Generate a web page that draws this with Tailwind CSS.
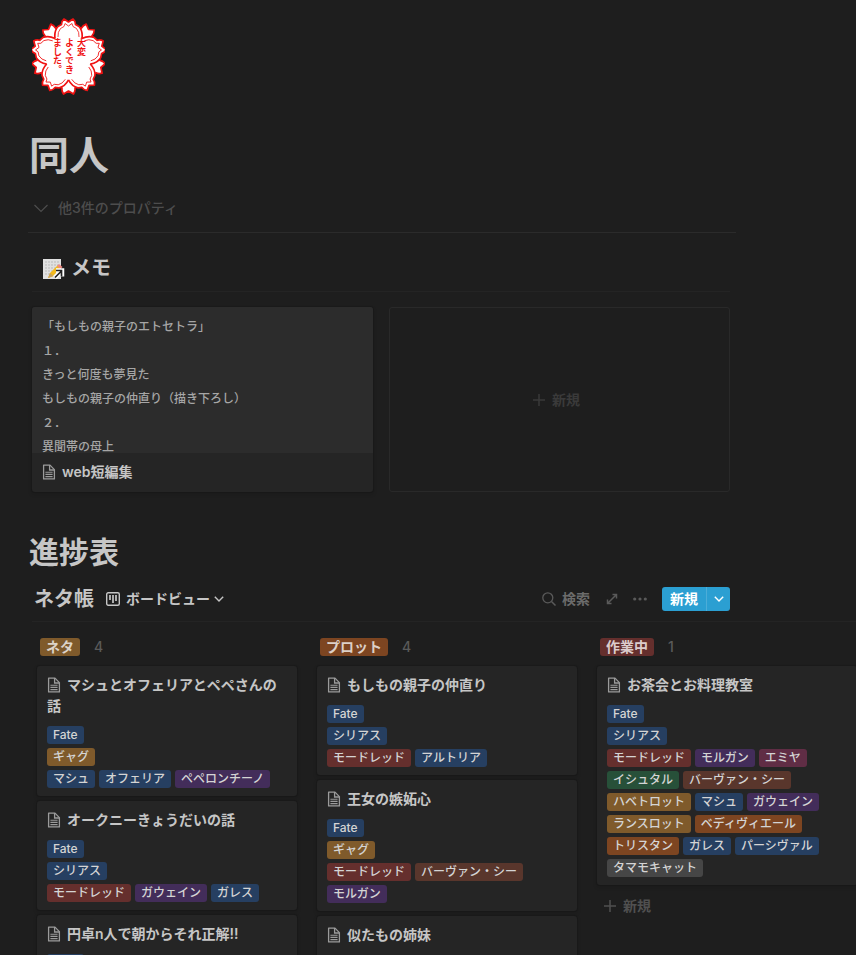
<!DOCTYPE html>
<html lang="ja">
<head>
<meta charset="utf-8">
<meta name="viewport" content="width=device-width, initial-scale=1">
<title>同人</title>
<script src="https://cdn.jsdelivr.net/npm/@tailwindcss/browser@4"></script>
</head>
<body class="bg-[#1e1e1e] text-[#c6c6c6] font-['Inter','Noto_Sans_CJK_JP',sans-serif]">
<svg class="hidden" aria-hidden="true">
  <symbol id="page" viewBox="0 0 14 16">
    <path d="M1.6 1.1H8l4.4 4.5v9.3H1.6z" fill="none" stroke="currentColor" stroke-width="1.3" stroke-linejoin="round"/>
    <path d="M7.6 1v5h4.8" fill="none" stroke="currentColor" stroke-width="1.3"/>
    <path d="M3.4 8.2h7.2M3.4 10.4h7.2M3.4 12.6h7.2" stroke="currentColor" stroke-width="1.1"/>
  </symbol>
  <symbol id="plus" viewBox="0 0 12 12"><path d="M6 0v12M0 6h12" stroke="currentColor" stroke-width="1.5"/></symbol>
  <symbol id="chevron" viewBox="0 0 10 6"><path d="M.8.8 5 5 9.2.8" fill="none" stroke="currentColor" stroke-width="1.4"/></symbol>
</svg>
<main class="h-screen overflow-x-hidden overflow-y-auto [scrollbar-width:none] pl-7 pt-[18px]">
  <header class="mr-[120px]">
    <svg class="ml-1 block h-[77px] w-[73px]" viewBox="-36.500 -39 73 77" role="img" aria-label="大変よくできました。">
      <defs>
        <path id="back" d="M-12-22Q-12-27-9-30L-6.500-31Q-7-34-5-37L0-34 5-37Q7-34 6.500-31L9-30Q12-27 12-22" />
        <path id="front" d="M-13.500-18.500Q-14.500-26-10.500-30.500L-7-32.500Q-7-36-4.500-38L0-35 4.500-38Q7-36 7-32.500L10.500-30.500Q14.500-26 13.500-18.500" />
        <path id="inner" d="M-10.500-20Q-11-25-8-28.500L-4.500-30.500-3.500-33.500 0-31 3.500-33.500 4.500-30.500 8-28.500Q11-25 10.500-20" />
      </defs>
      <g fill="#fff" stroke="#f01212" stroke-width="1.7" stroke-linejoin="round">
        <use href="#back" transform="rotate(36)"/><use href="#back" transform="rotate(108)"/><use href="#back" transform="rotate(180)"/><use href="#back" transform="rotate(252)"/><use href="#back" transform="rotate(324)"/>
        <circle r="23" stroke="none"/>
        <use href="#front"/><use href="#front" transform="rotate(72)"/><use href="#front" transform="rotate(144)"/><use href="#front" transform="rotate(216)"/><use href="#front" transform="rotate(288)"/>
        <circle r="22" stroke="none"/>
      </g>
      <g fill="none" stroke="#f01212" stroke-width=".8">
        <use href="#inner"/><use href="#inner" transform="rotate(72)"/><use href="#inner" transform="rotate(144)"/><use href="#inner" transform="rotate(216)"/><use href="#inner" transform="rotate(288)"/>
      </g>
      <g class="text-[9px] font-bold [writing-mode:vertical-rl]" fill="#f01212">
        <text x="13" y="-19">大変</text><text x="1" y="-19">よくでき</text><text x="-11" y="-19">ました。</text>
      </g>
    </svg>
    <h1 class="mt-[37px] pl-px text-[40px] leading-[48px] font-bold">同人</h1>
    <button class="mt-[14px] flex h-7 items-center gap-[10px] pl-[6px] text-sm text-[#4d4d4d] font-medium">
      <svg class="h-[9px] w-[14px]" viewBox="0 0 14 9"><path d="M.5 1 7 7.500 13.500 1" fill="none" stroke="currentColor" stroke-width="1.200"/></svg>
      他3件のプロパティ
    </button>
  </header>

  <section class="mt-[10px] mr-[120px] border-t border-[#2b2b2b] pt-3 pr-[6px] pl-1">
    <div class="flex h-[47px] items-center gap-[6px] border-b border-[#242424] pl-[10px]">
      <svg class="h-[23px] w-[23px]" viewBox="0 0 23 23" aria-hidden="true">
        <path d="M1 2h18v20H1z" fill="#e0e0e0"/>
        <path d="M3 5h14M3 8h14M3 11h14M3 14h9M3 17h7" stroke="#b9b9b9" stroke-width="1" stroke-dasharray="2 1"/>
        <path d="m6 21 2-5L16 8l3 3-8.500 8.500z" fill="#f2b91d"/><path d="m15 9 2-2 3.500 3-2 2z" fill="#ee8a83"/><path d="m6 21 2-5 3.500 3z" fill="#c8a15c"/>
        <path d="m13 20.500 6-6M14 13.500h6v6" fill="none" stroke="#fff" stroke-width="4.500"/>
        <path d="m13 20.500 6.500-6.500M14 13.500h5.500v6" fill="none" stroke="#222" stroke-width="1.700"/>
      </svg>
      <h2 class="text-xl font-bold">メモ</h2>
    </div>
    <div class="mt-[15px] grid grid-cols-2 gap-4">
      <a href="#" class="flex flex-col overflow-hidden rounded-[3px] bg-[#252525] shadow-[0_0_0_1px_rgba(15,15,15,0.2),0_2px_4px_rgba(15,15,15,0.2)]">
        <div class="h-[146px] overflow-hidden bg-[#2c2c2c] px-[10px] pt-2 text-xs leading-6 font-medium text-[#a6a6a6]">
          <p>「もしもの親子のエトセトラ」</p><p>１．</p><p>きっと何度も夢見た</p><p>もしもの親子の仲直り（描き下ろし）</p><p>２．</p><p>異聞帯の母上</p>
        </div>
        <div class="flex h-[39px] items-center gap-[6px] px-[10px] pb-[2px] text-sm font-semibold"><svg class="h-4 w-[14px] text-[#9b9b9b]"><use href="#page"/></svg>web短編集</div>
      </a>
      <button class="flex items-center justify-center gap-[7px] rounded-[3px] border border-[#292929] pr-[6px] text-sm font-semibold text-[#3a3a3a]"><svg class="h-3 w-3"><use href="#plus"/></svg>新規</button>
    </div>
  </section>

  <h2 class="mt-[41px] pl-px text-3xl leading-[39px] font-bold">進捗表</h2>

  <section class="pl-1">
    <div class="mt-[5px] border-b border-[#242424]">
      <div class="mr-[126px] flex h-11 items-center">
        <h3 class="pl-[2px] text-xl font-bold">ネタ帳</h3>
        <button class="ml-3 flex items-center text-sm font-semibold">
          <svg class="mr-[6px] h-[14px] w-[14px]" viewBox="0 0 14 14"><rect x=".7" y=".7" width="12.600" height="12.600" rx="1.500" fill="none" stroke="currentColor" stroke-width="1.400"/><path d="M4 3v5M7 3v8M10 3v6" stroke="currentColor" stroke-width="1.700"/></svg>
          ボードビュー
          <svg class="ml-1 h-[6px] w-[10px]"><use href="#chevron"/></svg>
        </button>
        <div class="ml-auto flex items-center text-[#6b6b6b]">
          <button class="flex items-center gap-[6px] text-sm font-semibold"><svg class="h-[14px] w-[14px] text-[#5a5a5a]" viewBox="0 0 14 14"><circle cx="5.800" cy="5.800" r="5" fill="none" stroke="currentColor" stroke-width="1.300"/><path d="m9.500 9.500 4 4" stroke="currentColor" stroke-width="1.500"/></svg>検索</button>
          <button class="ml-4 text-[#5a5a5a]" aria-label="全画面で開く"><svg class="block h-3 w-3" viewBox="0 0 12 12"><path d="M1.500 10.500 10.500 1.500M6.500 1.500h4v4M5.500 10.500h-4v-4" fill="none" stroke="currentColor" stroke-width="1.500"/></svg></button>
          <button class="ml-[15px] text-[#5a5a5a]" aria-label="その他"><svg class="block h-1 w-[14px]" viewBox="0 0 14 4" fill="currentColor"><circle cx="1.700" cy="2" r="1.600"/><circle cx="7" cy="2" r="1.600"/><circle cx="12.300" cy="2" r="1.600"/></svg></button>
          <div class="ml-[15px] flex h-6 overflow-hidden rounded-[3px] bg-[#2b9fd2] text-sm font-semibold text-white">
            <button class="px-2">新規</button>
            <button class="flex w-6 items-center justify-center border-l border-[#4cadd8]" aria-label="テンプレート"><svg class="h-[6px] w-[10px]"><use href="#chevron"/></svg></button>
          </div>
        </div>
      </div>
    </div>

    <div class="flex gap-5 overflow-x-auto pt-4 pl-[5px] [scrollbar-width:none]">
      <section class="w-[260px] shrink-0">
        <div class="flex h-[18px] items-center gap-[14px] pl-[3px] text-sm leading-[18px] font-medium"><h4 class="rounded-[3px] bg-[#7f5a2b] px-[6px] font-semibold text-[#dcd3c8]">ネタ</h4><span class="text-[#5a5a5a]">4</span></div>
        <div class="mt-[10px] flex flex-col gap-[5px]">
          <article class="rounded-[3px] bg-[#252525] px-[10px] py-2 shadow-[0_0_0_1px_rgba(15,15,15,0.2),0_2px_4px_rgba(15,15,15,0.2)]">
            <h5 class="text-sm leading-[21px] font-semibold"><svg class="mr-[6px] inline-block h-4 w-[14px] align-[-3px] text-[#9b9b9b]"><use href="#page"/></svg>マシュとオフェリアとペペさんの話</h5>
            <div class="mt-[10px] flex flex-col gap-1 text-xs leading-[18px] font-medium text-[#d4d4d4]">
              <div class="flex gap-1"><span class="rounded-[3px] bg-[#263f61] px-[6px]">Fate</span></div>
              <div class="flex gap-1"><span class="rounded-[3px] bg-[#7f5a2b] px-[6px]">ギャグ</span></div>
              <div class="flex flex-wrap gap-1"><span class="rounded-[3px] bg-[#263f61] px-[6px]">マシュ</span><span class="rounded-[3px] bg-[#263f61] px-[6px]">オフェリア</span><span class="rounded-[3px] bg-[#432d5a] px-[6px]">ペペロンチーノ</span></div>
            </div>
          </article>
          <article class="rounded-[3px] bg-[#252525] px-[10px] py-2 shadow-[0_0_0_1px_rgba(15,15,15,0.2),0_2px_4px_rgba(15,15,15,0.2)]">
            <h5 class="text-sm leading-[21px] font-semibold"><svg class="mr-[6px] inline-block h-4 w-[14px] align-[-3px] text-[#9b9b9b]"><use href="#page"/></svg>オークニーきょうだいの話</h5>
            <div class="mt-[10px] flex flex-col gap-1 text-xs leading-[18px] font-medium text-[#d4d4d4]">
              <div class="flex gap-1"><span class="rounded-[3px] bg-[#263f61] px-[6px]">Fate</span></div>
              <div class="flex gap-1"><span class="rounded-[3px] bg-[#263f61] px-[6px]">シリアス</span></div>
              <div class="flex flex-wrap gap-1"><span class="rounded-[3px] bg-[#652f2d] px-[6px]">モードレッド</span><span class="rounded-[3px] bg-[#432d5a] px-[6px]">ガウェイン</span><span class="rounded-[3px] bg-[#263f61] px-[6px]">ガレス</span></div>
            </div>
          </article>
          <article class="rounded-[3px] bg-[#252525] px-[10px] py-2 shadow-[0_0_0_1px_rgba(15,15,15,0.2),0_2px_4px_rgba(15,15,15,0.2)]">
            <h5 class="text-sm leading-[21px] font-semibold"><svg class="mr-[6px] inline-block h-4 w-[14px] align-[-3px] text-[#9b9b9b]"><use href="#page"/></svg>円卓n人で朝からそれ正解!!</h5>
            <div class="mt-[10px] flex flex-col gap-1 text-xs leading-[18px] font-medium text-[#d4d4d4]">
              <div class="flex gap-1"><span class="rounded-[3px] bg-[#263f61] px-[6px]">Fate</span></div>
            </div>
          </article>
        </div>
      </section>

      <section class="w-[260px] shrink-0">
        <div class="flex h-[18px] items-center gap-[14px] pl-[3px] text-sm leading-[18px] font-medium"><h4 class="rounded-[3px] bg-[#7d4521] px-[6px] font-semibold text-[#dcd0c8]">プロット</h4><span class="text-[#5a5a5a]">4</span></div>
        <div class="mt-[10px] flex flex-col gap-[5px]">
          <article class="rounded-[3px] bg-[#252525] px-[10px] py-2 shadow-[0_0_0_1px_rgba(15,15,15,0.2),0_2px_4px_rgba(15,15,15,0.2)]">
            <h5 class="text-sm leading-[21px] font-semibold"><svg class="mr-[6px] inline-block h-4 w-[14px] align-[-3px] text-[#9b9b9b]"><use href="#page"/></svg>もしもの親子の仲直り</h5>
            <div class="mt-[10px] flex flex-col gap-1 text-xs leading-[18px] font-medium text-[#d4d4d4]">
              <div class="flex gap-1"><span class="rounded-[3px] bg-[#263f61] px-[6px]">Fate</span></div>
              <div class="flex gap-1"><span class="rounded-[3px] bg-[#263f61] px-[6px]">シリアス</span></div>
              <div class="flex flex-wrap gap-1"><span class="rounded-[3px] bg-[#652f2d] px-[6px]">モードレッド</span><span class="rounded-[3px] bg-[#263f61] px-[6px]">アルトリア</span></div>
            </div>
          </article>
          <article class="rounded-[3px] bg-[#252525] px-[10px] py-2 shadow-[0_0_0_1px_rgba(15,15,15,0.2),0_2px_4px_rgba(15,15,15,0.2)]">
            <h5 class="text-sm leading-[21px] font-semibold"><svg class="mr-[6px] inline-block h-4 w-[14px] align-[-3px] text-[#9b9b9b]"><use href="#page"/></svg>王女の嫉妬心</h5>
            <div class="mt-[10px] flex flex-col gap-1 text-xs leading-[18px] font-medium text-[#d4d4d4]">
              <div class="flex gap-1"><span class="rounded-[3px] bg-[#263f61] px-[6px]">Fate</span></div>
              <div class="flex gap-1"><span class="rounded-[3px] bg-[#7f5a2b] px-[6px]">ギャグ</span></div>
              <div class="flex flex-wrap gap-1"><span class="rounded-[3px] bg-[#652f2d] px-[6px]">モードレッド</span><span class="rounded-[3px] bg-[#59362c] px-[6px]">バーヴァン・シー</span><span class="rounded-[3px] bg-[#432d5a] px-[6px]">モルガン</span></div>
            </div>
          </article>
          <article class="rounded-[3px] bg-[#252525] px-[10px] py-2 shadow-[0_0_0_1px_rgba(15,15,15,0.2),0_2px_4px_rgba(15,15,15,0.2)]">
            <h5 class="text-sm leading-[21px] font-semibold"><svg class="mr-[6px] inline-block h-4 w-[14px] align-[-3px] text-[#9b9b9b]"><use href="#page"/></svg>似たもの姉妹</h5>
            <div class="h-7"></div>
          </article>
        </div>
      </section>

      <section class="w-[260px] shrink-0">
        <div class="flex h-[18px] items-center gap-[14px] pl-[3px] text-sm leading-[18px] font-medium"><h4 class="rounded-[3px] bg-[#652f2d] px-[6px] font-semibold text-[#dccccc]">作業中</h4><span class="text-[#5a5a5a]">1</span></div>
        <div class="mt-[10px] flex flex-col gap-[5px]">
          <article class="rounded-[3px] bg-[#252525] px-[10px] py-2 shadow-[0_0_0_1px_rgba(15,15,15,0.2),0_2px_4px_rgba(15,15,15,0.2)]">
            <h5 class="text-sm leading-[21px] font-semibold"><svg class="mr-[6px] inline-block h-4 w-[14px] align-[-3px] text-[#9b9b9b]"><use href="#page"/></svg>お茶会とお料理教室</h5>
            <div class="mt-[10px] flex flex-col gap-1 text-xs leading-[18px] font-medium text-[#d4d4d4]">
              <div class="flex gap-1"><span class="rounded-[3px] bg-[#263f61] px-[6px]">Fate</span></div>
              <div class="flex gap-1"><span class="rounded-[3px] bg-[#263f61] px-[6px]">シリアス</span></div>
              <div class="flex flex-wrap gap-1">
                <span class="rounded-[3px] bg-[#652f2d] px-[6px]">モードレッド</span><span class="rounded-[3px] bg-[#432d5a] px-[6px]">モルガン</span><span class="rounded-[3px] bg-[#602d45] px-[6px]">エミヤ</span>
                <span class="rounded-[3px] bg-[#275039] px-[6px]">イシュタル</span><span class="rounded-[3px] bg-[#59362c] px-[6px]">バーヴァン・シー</span>
                <span class="rounded-[3px] bg-[#7f5a2b] px-[6px]">ハベトロット</span><span class="rounded-[3px] bg-[#263f61] px-[6px]">マシュ</span><span class="rounded-[3px] bg-[#432d5a] px-[6px]">ガウェイン</span>
                <span class="rounded-[3px] bg-[#7f5a2b] px-[6px]">ランスロット</span><span class="rounded-[3px] bg-[#7d4521] px-[6px]">ベディヴィエール</span>
                <span class="rounded-[3px] bg-[#7d4521] px-[6px]">トリスタン</span><span class="rounded-[3px] bg-[#263f61] px-[6px]">ガレス</span><span class="rounded-[3px] bg-[#263f61] px-[6px]">パーシヴァル</span>
                <span class="rounded-[3px] bg-[#464646] px-[6px]">タマモキャット</span>
              </div>
            </div>
          </article>
          <button class="flex h-8 items-center gap-[7px] pl-[7px] text-sm font-semibold text-[#505050]"><svg class="h-3 w-3"><use href="#plus"/></svg>新規</button>
        </div>
      </section>
    </div>
  </section>
</main>
</body>
</html>
